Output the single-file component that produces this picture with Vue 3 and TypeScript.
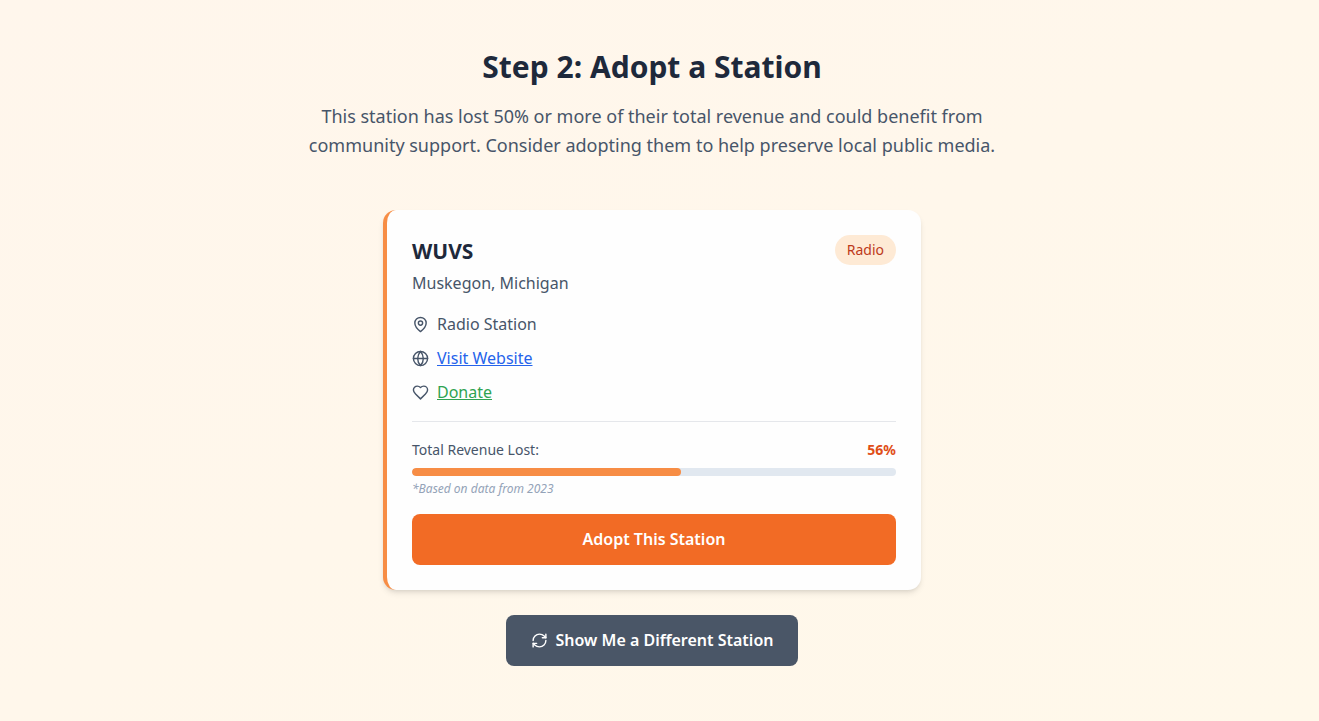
<script setup lang="ts">
import { ref } from 'vue'

interface Station {
  call: string
  place: string
  kind: string
  lost: number
  year: number
}

const station = ref<Station>({
  call: 'WUVS',
  place: 'Muskegon, Michigan',
  kind: 'Radio',
  lost: 55.5,
  year: 2023,
})
</script>

<template>
  <main class="page">
    <header class="intro">
      <h1>Step 2: Adopt a Station</h1>
      <p>
        This station has lost 50% or more of their total revenue and could benefit from
        community support. Consider adopting them to help preserve local public media.
      </p>
    </header>

    <article class="card">
      <div class="card-head">
        <div>
          <h2>{{ station.call }}</h2>
          <p class="place">{{ station.place }}</p>
        </div>
        <span class="badge">{{ station.kind }}</span>
      </div>

      <ul class="facts">
        <li>
          <svg class="icon" viewBox="0 0 24 24" aria-hidden="true">
            <path d="M20 10c0 6-8 12-8 12s-8-6-8-12a8 8 0 0 1 16 0Z" />
            <circle cx="12" cy="10" r="3" />
          </svg>
          <span>{{ station.kind }} Station</span>
        </li>
        <li>
          <svg class="icon" viewBox="0 0 24 24" aria-hidden="true">
            <circle cx="12" cy="12" r="10" />
            <path d="M12 2a14.5 14.5 0 0 0 0 20 14.5 14.5 0 0 0 0-20M2 12h20" />
          </svg>
          <a class="site" href="#website">Visit Website</a>
        </li>
        <li>
          <svg class="icon" viewBox="0 0 24 24" aria-hidden="true">
            <path d="M19 14c1.49-1.46 3-3.21 3-5.5A5.5 5.5 0 0 0 16.5 3c-1.76 0-3 .5-4.5 2-1.5-1.5-2.74-2-4.5-2A5.5 5.5 0 0 0 2 8.5c0 2.3 1.5 4.05 3 5.5l7 7Z" />
          </svg>
          <a class="donate" href="#donate">Donate</a>
        </li>
      </ul>

      <section class="revenue">
        <div class="revenue-row">
          <span>Total Revenue Lost:</span>
          <strong>{{ Math.round(station.lost) }}%</strong>
        </div>
        <div class="track">
          <div class="fill" :style="{ width: station.lost + '%' }"></div>
        </div>
        <p class="note">*Based on data from {{ station.year }}</p>
      </section>

      <button class="adopt" type="button">Adopt This Station</button>
    </article>

    <button class="another" type="button">
      <svg class="icon" viewBox="0 0 24 24" aria-hidden="true">
        <path d="M3 12a9 9 0 0 1 9-9 9.75 9.75 0 0 1 6.74 2.74L21 8" />
        <path d="M21 3v5h-5" />
        <path d="M21 12a9 9 0 0 1-9 9 9.75 9.75 0 0 1-6.74-2.74L3 16" />
        <path d="M8 16H3v5" />
      </svg>
      <span>Show Me a Different Station</span>
    </button>
  </main>
</template>

<style>
body {
  margin: 0;
}
</style>

<style scoped>
.page {
  box-sizing: border-box;
  min-height: 100vh;
  padding: 46px 31px 50px 16px;
  display: flex;
  flex-direction: column;
  align-items: center;
  background: linear-gradient(to bottom right, #fff6ec, #fff8ea);
  color: #475569;
  font-family: "Segoe UI", "Noto Sans", sans-serif;
  font-size: 16px;
  line-height: 25px;
}
h1,
h2,
p,
ul {
  margin: 0;
  padding: 0;
}
.intro {
  max-width: 704px;
  text-align: center;
  margin-bottom: 50px;
}
h1 {
  color: #1e293b;
  font-size: 30px;
  line-height: 42px;
  font-weight: 700;
  margin-bottom: 14px;
}
.intro p {
  font-size: 18px;
  line-height: 29px;
}
.card {
  box-sizing: border-box;
  width: 100%;
  max-width: 538px;
  padding: 25px;
  border-left: 4px solid #f78d45;
  border-radius: 13px;
  background: #fefefe;
  box-shadow: 0 4px 6px -1px rgba(0, 0, 0, 0.1), 0 2px 4px -2px rgba(0, 0, 0, 0.1);
}
.card-head {
  display: flex;
  justify-content: space-between;
  align-items: flex-start;
  margin-bottom: 16px;
}
h2 {
  color: #1e293b;
  font-size: 21px;
  line-height: 32px;
  font-weight: 700;
  margin-bottom: 4px;
}
.badge {
  padding: 4px 12px;
  border-radius: 16px;
  background: #feead5;
  color: #bd3a1b;
  font-size: 14px;
  line-height: 22px;
}
.facts {
  display: flex;
  flex-direction: column;
  gap: 9px;
  list-style: none;
}
.facts li {
  display: flex;
  align-items: center;
  gap: 8px;
}
.icon {
  width: 17px;
  height: 17px;
  flex: none;
  fill: none;
  stroke: currentColor;
  stroke-width: 2;
  stroke-linecap: round;
  stroke-linejoin: round;
}
.site {
  color: #2563eb;
}
.donate {
  color: #2fa351;
}
.revenue {
  margin-top: 16px;
  padding-top: 17px;
  border-top: 1px solid #e5e7eb;
}
.revenue-row {
  display: flex;
  justify-content: space-between;
  font-size: 14px;
  line-height: 22px;
  margin-bottom: 7px;
}
.revenue-row strong {
  color: #e04e18;
  font-weight: 700;
}
.track {
  height: 8px;
  border-radius: 4px;
  background: #e1e8f0;
  overflow: hidden;
}
.fill {
  height: 100%;
  border-radius: 4px;
  background: #f78d45;
}
.note {
  color: #94a3b8;
  font-size: 12px;
  line-height: 18px;
  font-style: italic;
  margin-top: 4px;
}
button {
  border: 0;
  border-radius: 8px;
  color: #fff;
  font: inherit;
  font-weight: 600;
  cursor: pointer;
}
.adopt {
  width: 100%;
  margin-top: 16px;
  padding: 13px 25px;
  background: #f26b25;
}
.another {
  display: flex;
  align-items: center;
  gap: 8px;
  margin-top: 25px;
  padding: 13px 25px;
  background: #4a5667;
}
</style>
